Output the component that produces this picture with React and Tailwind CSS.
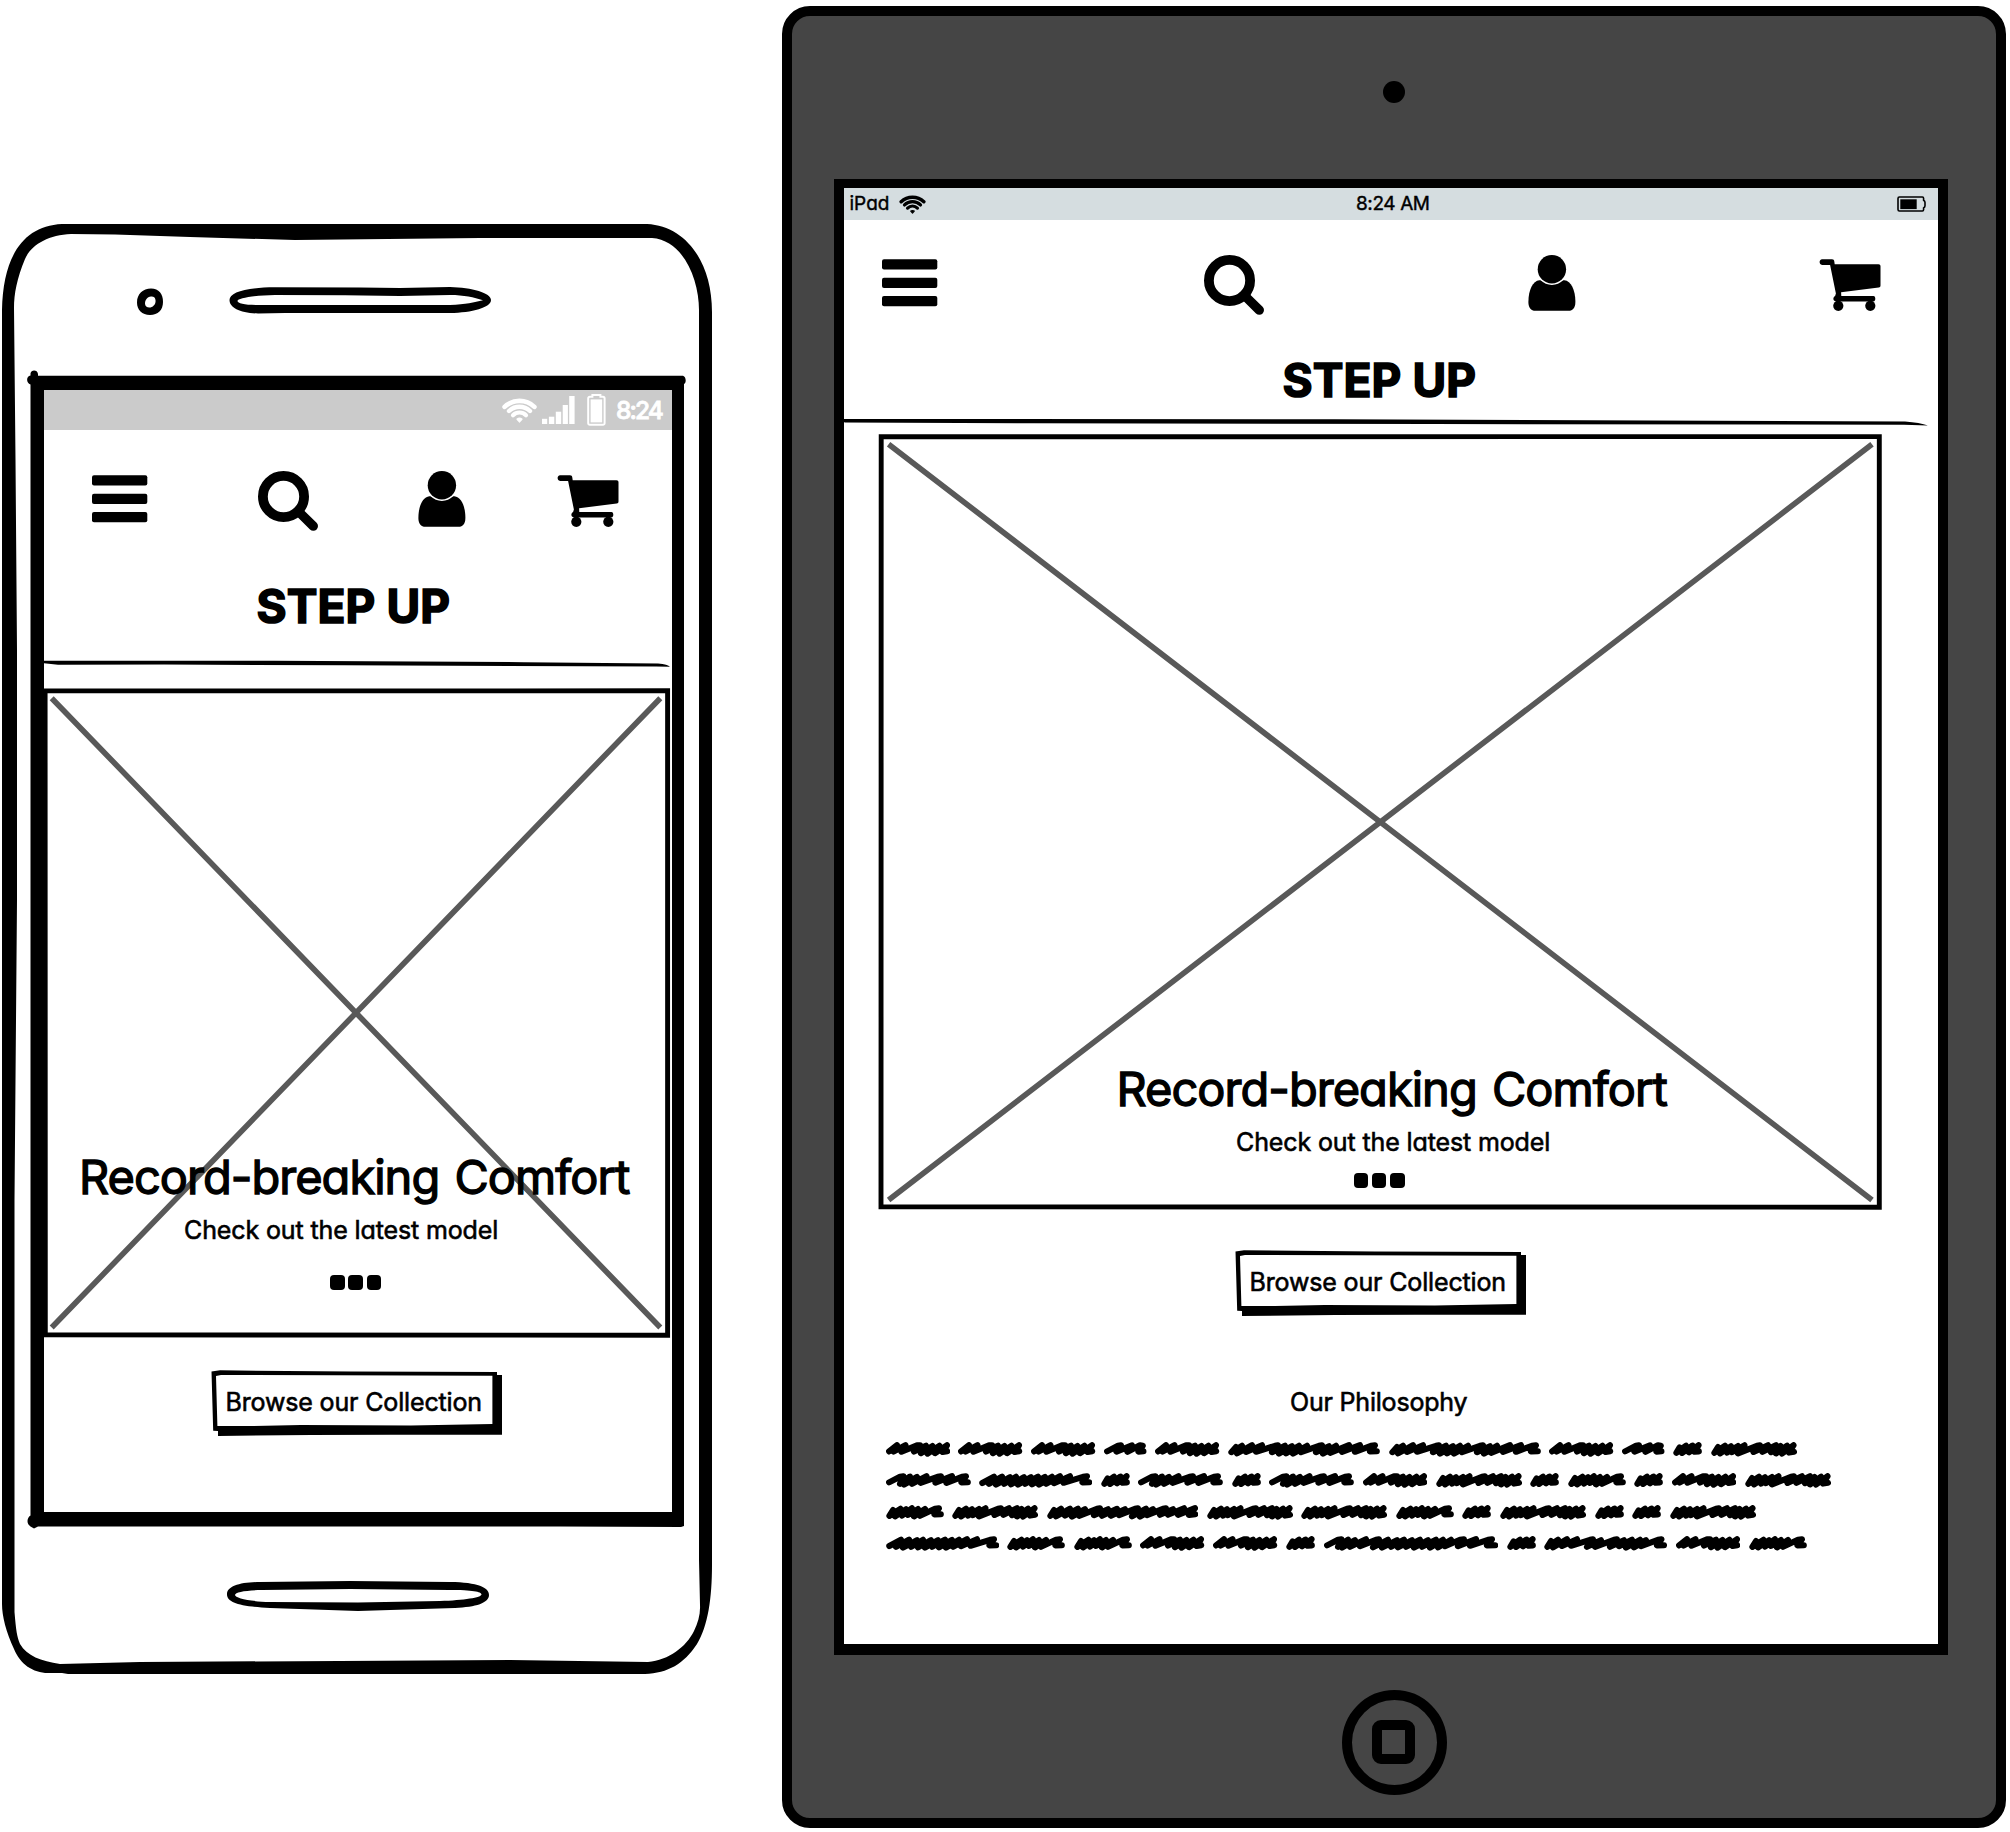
import React from "react";

/* ---------- icons ---------- */

function MenuIcon({ className }) {
  return (
    <svg className={className} width="56" height="60" viewBox="0 0 56 60">
      <rect x="0" y="4.3" width="55.3" height="10.3" rx="2" />
      <rect x="0" y="22.8" width="55.3" height="10.3" rx="2" />
      <rect x="0" y="41" width="55.3" height="10.3" rx="2" />
    </svg>
  );
}

function SearchIcon({ className }) {
  return (
    <svg className={className} width="61" height="60" viewBox="0 0 61 60" fill="none" stroke="#000">
      <circle cx="25.5" cy="25.5" r="20.6" strokeWidth="9.8" />
      <path d="M43 43L55.3 55.1" strokeWidth="9.4" strokeLinecap="round" />
    </svg>
  );
}

function UserIcon({ className }) {
  return (
    <svg className={className} width="48" height="60" viewBox="-0.4 0 48 60">
      <path d="M11 25.3C4.5 25.8 0 35 0 47C0 52.8 2.5 55.8 7 55.8H40C44.5 55.8 47 52.8 47 47C47 35 42.5 25.8 36 25.3Z" />
      <circle cx="23.5" cy="14.2" r="15.8" fill="#fff" />
      <circle cx="23.5" cy="14.2" r="14.2" />
    </svg>
  );
}

function CartIcon({ className }) {
  return (
    <svg className={className} width="62" height="60" viewBox="-0.5 0 62 60">
      <path d="M2.6 4.3H12.5C14 4.3 14.6 5.2 14.8 6.5L15.2 9.2H59C60.3 9.2 61 9.9 61 11.2V30.6C61 31.9 60.4 32.4 59.2 32.6L21.6 37.2L21.8 41H54C56.4 41 56.4 46.4 54 46.4H16.4C13.4 46.2 13 42.6 15.6 41L16.4 38.6L10.6 9.9H2.6C-.7 9.9 -.7 4.3 2.6 4.3Z" />
      <circle cx="18.8" cy="50.8" r="5.1" />
      <circle cx="50.8" cy="50.8" r="5.1" />
    </svg>
  );
}

function WifiIcon({ className }) {
  return (
    <svg className={className} viewBox="0 0 35 25" fill="none" stroke="currentColor" strokeLinecap="round">
      <path d="M2.6 8.9A21.5 21.5 0 0 1 32.4 8.9" strokeWidth="4.6" />
      <path d="M7 13A15.2 15.2 0 0 1 28 13" strokeWidth="4.4" />
      <path d="M11 17.2A9.2 9.2 0 0 1 24 17.2" strokeWidth="4.2" />
      <path d="M15.2 21.2Q17.5 19.6 19.8 21.2L17.5 23.8Z" fill="currentColor" strokeWidth="1.6" strokeLinejoin="round" />
    </svg>
  );
}

function SignalIcon({ className }) {
  return (
    <svg className={className} width="33" height="28" viewBox="0 0 33 28" fill="currentColor">
      <rect x="0" y="22.8" width="5.2" height="5.2" />
      <rect x="6.9" y="20.7" width="5.4" height="7.3" />
      <rect x="13.8" y="15.7" width="5.4" height="12.3" />
      <rect x="20.7" y="9" width="5.2" height="19" />
      <rect x="27.2" y="0" width="5.4" height="28" />
    </svg>
  );
}

function PhoneBattery({ className }) {
  return (
    <svg className={className} width="19" height="32" viewBox="0 0 19 32">
      <path d="M5.4 2.8V1H13.4V2.8H16A1.6 1.6 0 0 1 17.6 4.4V29.2A1.6 1.6 0 0 1 16 30.8H2.8A1.6 1.6 0 0 1 1.2 29.2V4.4A1.6 1.6 0 0 1 2.8 2.8Z" fill="none" stroke="#fff" strokeWidth="2" />
      <rect x="3.6" y="5.4" width="11.6" height="23" fill="#fff" />
    </svg>
  );
}

function TabletBattery({ className }) {
  return (
    <svg className={className} width="29" height="16" viewBox="0 0 29 16">
      <path d="M2.4 1H25.4Q26.6 1 26.6 2.4V4.2Q28 5 28 6.4V9.8Q28 11.2 26.6 12V13.6Q26.6 15 25.4 15H2.4Q1 15 1 13.6V2.4Q1 1 2.4 1Z" fill="none" stroke="#000" strokeWidth="1.6" />
      <rect x="3.3" y="3.3" width="16.4" height="9.8" />
    </svg>
  );
}

/* ---------- scribbled body copy ---------- */

const SCRIBBLES = {
  M: { w: 64.4, d: "M3.1 9.4L11 3.2L7.5 9.6L19.5 3.2L15.5 9.8L31 3.4L34 3.4L28 9.6L40 3.8L35 11.2L46.5 4L41.5 11.6L53.5 3.8L49 11.2L61 3.2L56.5 10L61.2 9.2" },
  N: { w: 42.6, d: "M3.1 9.4L14 3.8L17 3.3L12.5 9.6L28 3.3L23.5 9.8L36 3.3L38.8 3.8L34.5 9.6L39.4 9.2" },
  S: { w: 29, d: "M6.5 5.5L3.4 10.8L13 3.8L9 11L19.5 3.6L16 10.4L25.6 3.2L21.5 9.8L25.8 9.4" },
  F: { w: 58, d: "M7 5L3.4 10.8L14.5 3.8L9 11.4L20 4.2L16 10.6L26 3.2L22 10L32 4L28 11.4L39 4L34 10.8L49 3.8L53 3.3L48.5 9.4L54.8 9.2" },
  B: { w: 86.2, d: "M7 5L3.4 10.8L14 3.8L9 11.4L20 4.2L16 10.6L27 4L21 10.2L33.5 3.3L27 11.4L46 3.8L49 3.3L42.5 10L57 3.2L51.5 9.8L65 3.2L60 10.2L69.5 4L65 11.4L76 3.8L71 11.6L82.6 3.2L78 10.6L83 9.8" },
  A: { w: 85, d: "M3.1 9.4L14 3.8L17.5 3.3L14 10.8L24 3.6L18 11.6L31 4L26 10.8L40.5 3.2L34.5 9.8L51.5 3.8L55 3.3L49.5 9.6L66 3.2L60.5 9.8L76 3.8L80 3.3L75.5 9.4L81.8 9.2" },
  C: { w: 113.4, d: "M3.3 10L15 3.8L10 10.8L23 3.6L17 11.6L31 4.2L25 10.8L37 3.8L32 11.4L45 4.2L39 11.6L52 4.2L46 10.8L59 3.8L53 11.4L66 4L60 11.6L73 3.8L67 10.8L81 3.2L75 10.2L91 3.2L84.5 9.8L104 3.8L108 3.3L103.5 9.4L110.2 9.2" },
  D: { w: 152, d: "M8 5L3.4 10.2L14 3.8L9 11.4L24 3.2L18 10L34 3.2L28 9.8L47 3.8L50 3.3L44 10.2L57 3.8L51 11.6L64 4.2L58 11.4L71 3.8L65 11.6L79 3.8L73 10.2L91 3.8L94 3.3L88 10.2L101 4.2L95 11.6L108 3.8L102 10.8L121 3.2L114 9.8L132 3.2L127 9.8L143 3.8L147 3.3L142 9.4L148.8 9.2" },
  E: { w: 151.4, d: "M7 5L3.4 10.8L14 3.8L9 11.4L23 3.8L18 10.6L31 3.8L25 11.6L38 4.2L32 10.8L50 3.8L53 3.3L47 10.2L61 4.2L55 10.8L70 3.8L64 10.8L78 4.2L72 10.2L88 3.8L91 3.3L85 11.4L99 3.8L93 11.6L106 4.2L100 10.2L116 3.8L119 3.3L113 9.8L126 4.2L121 9.8L137 3.2L131 9.8L148 3.2L142 10L148.2 9.2" },
  G: { w: 174.4, d: "M3.1 9.4L14 3.8L17.5 3.3L14 10.8L24 3.6L18 11.6L31 4.2L26 10.8L42 3.2L36 10.2L52 3.8L55 3.3L49 11.4L64 3.8L58 11.6L73 4.2L67 10.8L80 3.8L74 11.4L88 4.2L82 10.8L96 3.8L90 11.6L104 4.2L98 10.8L112 3.8L106 11.6L119 3.8L114 11.4L127 3.8L121 10.2L136 3.8L140 3.3L134 10.2L152 3.2L146 9.8L164 3.8L168 3.3L163 9.4L171.2 9.2" },
  H: { w: 123.2, d: "M7 5L3.4 10.8L14 3.8L9 11.4L23 3.2L18 10L33 3.2L27 9.8L46 3.8L49 3.3L43 10.8L57 4.2L51 10.8L70 3.8L73 3.3L66 10.8L80 4.2L75 10.2L88 3.8L82 11.6L96 3.8L90 11.4L102 4.2L97 10.2L114 3.8L117.5 3.3L113 9.4L120 9.2" },
};

const PARAGRAPH = ["MMMNMDDMNSB", "ACSASAMBSFSMB", "FBEBBFSBSSB", "CFFMMSGSHMF"];

function ScribbleWord({ kind }) {
  const { w, d } = SCRIBBLES[kind];
  return (
    <svg className="block shrink-0" width={w} height="15" viewBox={`0 0 ${w} 15`} fill="none" stroke="#000" strokeWidth="6.1" strokeLinecap="round" strokeLinejoin="round">
      <path d={d} />
    </svg>
  );
}

function ScribbleParagraph() {
  return (
    <div className="mt-[24.5px] ml-[41.5px] flex flex-col gap-[16.6px]">
      {PARAGRAPH.map((line) => (
        <div key={line} className="flex gap-[8.5px]">
          {line.split("").map((kind, i) => (
            <ScribbleWord key={i} kind={kind} />
          ))}
        </div>
      ))}
    </div>
  );
}

/* ---------- shared pieces ---------- */

function Title({ className }) {
  return (
    <h1 className={`h-15 text-[46px] leading-[61px] font-bold tracking-[0.1px] [-webkit-text-stroke:1.6px_black] ${className}`}>
      STEP UP
    </h1>
  );
}

function Headline({ className }) {
  return (
    <h2 className={`h-15 text-[47px] leading-[61px] font-normal tracking-[-0.98px] whitespace-nowrap [word-spacing:3px] [-webkit-text-stroke:1.3px_black] ${className}`}>
      Record-breaking Comfort
    </h2>
  );
}

function Subline({ className }) {
  return (
    <p className={`text-[25px] leading-[30px] tracking-[-0.12px] [-webkit-text-stroke:0.6px_black] ${className}`}>
      Check out the latest model
    </p>
  );
}

function Dots({ className }) {
  return (
    <div className={`flex gap-[3.8px] ${className}`}>
      {[0, 1, 2].map((i) => (
        <span key={i} className="h-[15px] w-[14.5px] rounded-[4px] bg-black" />
      ))}
    </div>
  );
}

function BrowseButton({ className }) {
  return (
    <button className={`relative block h-[66px] w-[291px] pl-[14.5px] text-left ${className}`}>
      <svg className="absolute inset-0" width="291" height="66" viewBox="0 0 291 66">
        <path fillRule="evenodd" d="M.5 1.4L9 .3L140 1.6L286 2V5H291V64.7H180L100 65L7 66V61L2.2 60.8ZM5 6L10 5L281.4 5.7V54L200 55.6L90 55L40 56L6.4 56Z" />
      </svg>
      <span className="relative block h-[66px] text-[25px] leading-[65px] tracking-[-0.15px] whitespace-nowrap [-webkit-text-stroke:0.6px_black]">
        Browse our Collection
      </span>
    </button>
  );
}

/* ---------- phone ---------- */

function PhoneBody() {
  return (
    <svg className="absolute inset-0" width="712" height="1450" viewBox="0 224 712 1450">
      {/* shell */}
      <path
        fillRule="evenodd"
        d="M62 224H647C686 226 712 262 712 312V1565C712 1598 708 1626 697 1644C684 1664 668 1673 645 1674H68L62 1673H48C33 1673 20 1664 14 1649C6 1632 2 1616 2 1604V310C3 258 22 226 62 224ZM71 234C48 235 31 245 25 259C17 278 14 294 14 308L15.5 460L17 650V900L14.5 1200V1612C16 1630 17 1637 20 1644C27 1656 41 1661 60 1664L140 1662L510 1660L648 1662C669 1660 686 1647 694 1631C698 1623 700.5 1614 700 1605L699 1560V310C699 279 683 240 652 238L480 238L295 240L190 237L115 234.5Z"
      />
      {/* camera */}
      <path
        fillRule="evenodd"
        d="M151 288.6C159 288.6 163 294 163 302C163 310 158 315 150 315C142 315 137 310 137 302.5C137 294 143 288.6 151 288.6ZM151 296.5C147 297 145 300 145 303.5C145 306.5 147.5 308 150.5 307.5C154 306.5 156 303.5 155.5 300C155 297 153.5 296.3 151 296.5Z"
      />
      {/* speaker */}
      <path
        fillRule="evenodd"
        d="M275 287.2L360 287.4L400 288L450 287C472 287.5 491 293 491 300C491 307.5 472 312.8 450 313H285L258 313.4C240 313.4 229.5 307.5 229.5 300C229.5 292 246 287.5 275 287.2ZM275 295C253 295.3 237.5 298.5 237.5 301C237.5 303.5 245 305 258 305H450C466 304.5 474 302 483 300.2C474 297.5 464 295 450 295L400 296L345 295.2Z"
      />
      {/* screen bezel */}
      <path
        fillRule="evenodd"
        d="M30.5 373.5C31 369.5 37.5 369.5 38 374V375.8H683C686.4 377 686.4 383 684 384V1526L681 1527L560 1526.4L38 1526.4L34 1528.6L30.5 1526.4C26.5 1524 26.5 1518 30.5 1515.5V384.5C26 382.5 26 376.5 30.5 375.5ZM44 390V1512H672V390Z"
      />
      {/* home bar */}
      <path
        fillRule="evenodd"
        d="M260 1582L350 1581L450 1582C478 1582.3 489 1587.5 489 1595C489 1603 476 1607 455 1608L358 1611L270 1608C240 1606.5 227 1602.5 227 1594.5C227 1586 240 1582.3 260 1582ZM262 1590C246 1590.3 235 1592 235 1595C235 1598 250 1601.5 270 1602L358 1602.6L440 1601C464 1600.3 481.5 1597.5 481.5 1594.5C481.5 1591.5 472 1590.2 450 1590L350 1589Z"
      />
    </svg>
  );
}

function Phone() {
  return (
    <section className="relative mt-[224px] h-[1450px] w-[712px] shrink-0">
      <PhoneBody />
      <div className="relative mt-[166px] ml-[44px] flex h-[1122px] w-[628px] flex-col items-start">
        <div className="flex h-10 w-full shrink-0 items-center justify-end bg-[#cbcbcb] pr-[8px] text-white">
          <WifiIcon className="h-[25px] w-[35px]" />
          <SignalIcon className="ml-[5px]" />
          <PhoneBattery className="ml-[12px]" />
          <span className="ml-[10px] w-[48px] text-[24.5px] leading-[41px] font-medium tracking-[-1.9px] whitespace-nowrap [-webkit-text-stroke:0.8px_white]">
            8:24
          </span>
        </div>
        <nav className="mt-[41px] flex h-15 shrink-0">
          <MenuIcon className="ml-[48px]" />
          <SearchIcon className="ml-[110px]" />
          <UserIcon className="ml-[99px]" />
          <CartIcon className="ml-[91px]" />
        </nav>
        <Title className="mt-[45px] ml-[212.5px]" />
        <svg className="mt-[23px] block shrink-0" width="628" height="10" viewBox="0 0 628 10">
          <path d="M0 1.8L230 1.8L480 3.2L614 4.4Q624 5 626 7.8L612 7.6L300 6.2L120 5.6L14 5.8L0 4.2Z" />
        </svg>
        <div className="relative mt-[19px] -ml-px h-[650px] w-[628px] shrink-0">
          <svg className="absolute inset-0" width="628" height="650" viewBox="0 0 628 650" fill="none">
            <path d="M8.7 10.2L617.3 639.5M617.3 10.2L8.7 639.5" stroke="#595959" strokeWidth="5.6" />
            <path d="M2.1 2.9L624.6 2.8V647.2L2.3 646.8Z" stroke="#000" strokeWidth="4.9" />
          </svg>
          <div className="relative flex flex-col items-start pt-[458px]">
            <Headline className="ml-[36px]" />
            <Subline className="mt-[9px] ml-[141px]" />
            <Dots className="mt-[30px] ml-[287px]" />
          </div>
        </div>
        <BrowseButton className="mt-[32px] ml-[167px] shrink-0" />
      </div>
    </section>
  );
}

/* ---------- tablet ---------- */

function Tablet() {
  return (
    <section className="mt-[6px] ml-[70px] flex h-[1822px] w-[1224px] shrink-0 flex-col items-center rounded-[28px] border-[10px] border-black bg-[#454545]">
      <div className="mt-[65px] size-[22px] shrink-0 rounded-full bg-black" />
      <div className="mt-[76px] mr-[6px] flex h-[1476px] w-[1114px] shrink-0 flex-col items-start border-x-[10px] border-t-[9px] border-b-[11px] border-black bg-white">
        <div className="flex h-8 w-full shrink-0 items-center bg-[#d5dde0] text-[19px] leading-8">
          <span className="ml-[5.5px] w-[39px] [-webkit-text-stroke:0.4px_black]">iPad</span>
          <WifiIcon className="ml-[10px] h-[19px] w-[27px]" />
          <span className="ml-[430.5px] tracking-[-0.4px] whitespace-nowrap [-webkit-text-stroke:0.4px_black]">8:24 AM</span>
          <TabletBattery className="mr-[12px] ml-auto" />
        </div>
        <nav className="mt-[35px] flex h-15 shrink-0">
          <MenuIcon className="ml-[38px]" />
          <SearchIcon className="ml-[266px]" />
          <UserIcon className="ml-[263px]" />
          <CartIcon className="ml-[243px]" />
        </nav>
        <Title className="mt-[35px] ml-[438.5px]" />
        <svg className="mt-[7px] -ml-[10px] block shrink-0" width="1095" height="10" viewBox="0 0 1095 10">
          <path d="M0 1.5L11 2L500 2.2L1071 4.4Q1086 5.4 1094 8.6L1070 7.8L600 7L200 6.2L11 5.6Z" />
        </svg>
        <div className="relative mt-[7px] ml-[34px] h-[776px] w-[1004px] shrink-0">
          <svg className="absolute inset-0" width="1004" height="776" viewBox="0 0 1004 776" fill="none">
            <path d="M10.6 10.2L994 766M994 10.2L10.6 766" stroke="#595959" strokeWidth="5.6" />
            <path d="M3.2 2.8L1001.3 2.6V773.2L3 772.8Z" stroke="#000" strokeWidth="4.9" />
          </svg>
          <div className="relative flex flex-col items-start pt-[624px]">
            <Headline className="ml-[238.5px]" />
            <Subline className="mt-[9px] ml-[358px]" />
            <Dots className="mt-[15.5px] ml-[475.5px]" />
          </div>
        </div>
        <BrowseButton className="mt-[40px] ml-[391px] shrink-0" />
        <p className="mt-[71px] ml-[446px] text-[25px] leading-[30px] tracking-[-0.2px] [-webkit-text-stroke:0.6px_black]">
          Our Philosophy
        </p>
        <ScribbleParagraph />
      </div>
      <div className="mt-[34.5px] flex size-[105px] shrink-0 items-center justify-center rounded-full border-[10px] border-black">
        <div className="mr-px size-[43.5px] rounded-[9px] border-[10px] border-black" />
      </div>
    </section>
  );
}

export default function App() {
  return (
    <main className="flex h-[1832px] w-[2010px] items-start overflow-hidden bg-white font-['Inter',sans-serif] text-black [font-feature-settings:'cv11']">
      <Phone />
      <Tablet />
    </main>
  );
}
